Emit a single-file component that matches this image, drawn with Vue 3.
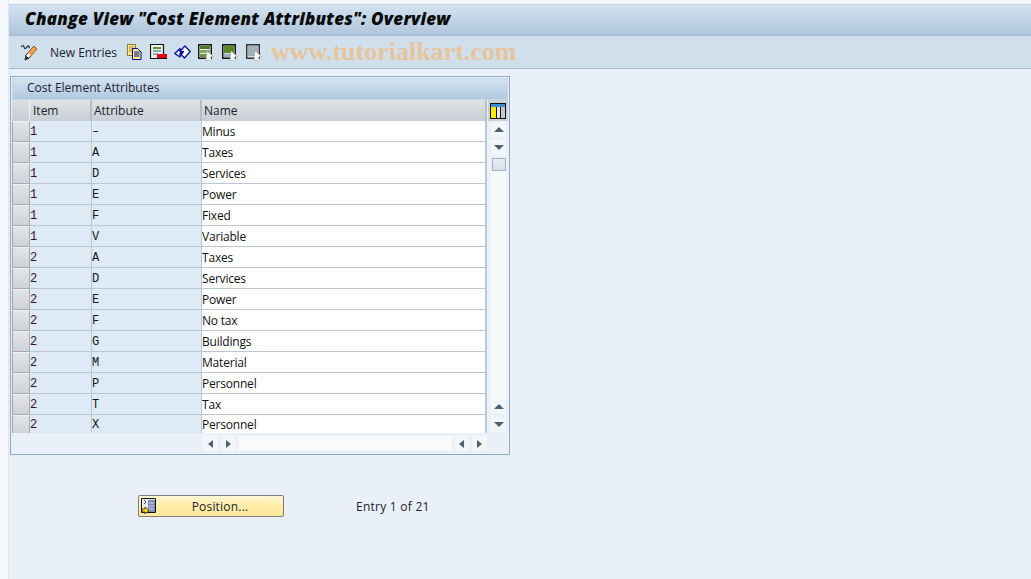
<script setup>
const rows = [
  ['1', '–', 'Minus'], ['1', 'A', 'Taxes'], ['1', 'D', 'Services'], ['1', 'E', 'Power'], ['1', 'F', 'Fixed'],
  ['1', 'V', 'Variable'], ['2', 'A', 'Taxes'], ['2', 'D', 'Services'], ['2', 'E', 'Power'], ['2', 'F', 'No tax'],
  ['2', 'G', 'Buildings'], ['2', 'M', 'Material'], ['2', 'P', 'Personnel'], ['2', 'T', 'Tax'], ['2', 'X', 'Personnel']
]
</script>

<template>
  <div class="page">
    <div class="margin"></div>
    <div class="main">
      <div class="title">Change View "Cost Element Attributes": Overview</div>
      <div class="toolbar">
        <svg class="ico pencil" width="18" height="18" viewBox="0 0 18 18">
          <path d="M1 4c1-2 2.500-2 3 0s2 2 3 0 2-1 2.500 1" fill="none" stroke="#222" stroke-width="1.200"/>
          <path d="M5 17l1-5 8-9 3 3-8 9z" fill="#fff" stroke="#222"/>
          <path d="M8 10l6-7 3 3-6 7z" fill="#f0a040"/>
          <path d="M5 17l1-4 3 2z" fill="#222"/>
        </svg>
        <span class="new">New Entries</span>
        <svg class="ico copy" width="16" height="16" viewBox="0 0 16 16">
          <path d="M.5.500h8v11h-8z" fill="#ffe680" stroke="#8a7a40"/>
          <path d="M2 3h5M2 5h5M2 7h5" stroke="#a09050"/>
          <path d="M5.500 4.500h5l3.500 3.500v7.500h-8.500z" fill="#fff27a" stroke="#00009c"/>
          <path d="M7 8h5.500M7 10h5.500M7 12h5.500" stroke="#00009c"/>
        </svg>
        <svg class="ico del" width="17" height="16" viewBox="0 0 17 16">
          <path d="M.5.500h13v14H.5z" fill="#eef2f2" stroke="#111" stroke-width="1.200"/>
          <path d="M3 3h8v2H3z" fill="#6a9030"/><path d="M3 6h8v2H3z" fill="#8aa8a0"/><path d="M3 9h5v2H3z" fill="#a0b0b0"/>
          <path d="M7 10h10v4H7z" fill="#e0000c"/><path d="M7 14h10v1H7z" fill="#111"/>
        </svg>
        <svg class="ico undo" width="17" height="16" viewBox="0 0 17 16">
          <path d="M.8 9.500l5.200-5v3l3-3.500 2-2 5.200 5.500-5.700 6.500-3.500-3.500 2.500-3-2 .5-1.500 1.500v3.500z" fill="#fff" stroke="#0a0a9a" stroke-width="1.300" stroke-linejoin="round"/>
        </svg>
        <svg class="ico sel1" width="16" height="17" viewBox="0 0 16 17">
          <path d="M.7.700h12.600v13.600H.7z" fill="#e8eef0" stroke="#111" stroke-width="1.400"/>
          <path d="M2 2h10v3H2z" fill="#4e7a28"/><path d="M2 6h10v3H2z" fill="#8aa860"/><path d="M2 10h10v3H2z" fill="#6f9040"/>
          <path d="M9 7l6.500 5.500-3 .5 1 3-5.500 .5z" fill="#fff" stroke="#999" stroke-width=".5"/>
        </svg>
        <svg class="ico sel2" width="16" height="17" viewBox="0 0 16 17">
          <path d="M.7.700h12.600v13.600H.7z" fill="#c8d4dc" stroke="#111" stroke-width="1.400"/>
          <path d="M2 2h10v7H2z" fill="#5c8428"/><path d="M2 10h10v3H2z" fill="#9ab0c0"/>
          <path d="M9 7l6.500 5.500-3 .5 1 3-5.500 .5z" fill="#fff" stroke="#999" stroke-width=".5"/>
        </svg>
        <svg class="ico sel3" width="16" height="17" viewBox="0 0 16 17">
          <path d="M.7.700h12.600v13.600H.7z" fill="#d8e0e4" stroke="#333" stroke-width="1.400"/>
          <path d="M2 3h10M2 5h10M2 7h10M2 9h10M2 11h10" stroke="#708090"/>
          <path d="M9 7l6.500 5.500-3 .5 1 3-5.500 .5z" fill="#fff" stroke="#999" stroke-width=".5"/>
        </svg>
        <span class="mark">www.tutorialkart.com</span>
      </div>

      <section class="group">
        <div class="group-title">Cost Element Attributes</div>
        <div class="table-area">
          <div class="table">
            <div class="head">
              <div class="corner"></div>
              <div class="hc c-item">Item</div>
              <div class="hc c-attr">Attribute</div>
              <div class="hc c-name">Name</div>
            </div>
            <div class="body">
              <div v-for="(r, i) in rows" :key="i" class="row">
                <div class="sel"></div>
                <div class="c c-item key">{{ r[0] }}</div>
                <div class="c c-attr mono">{{ r[1] }}</div>
                <div class="c c-name val">{{ r[2] }}</div>
              </div>
            </div>
            <div class="hbar">
              <span class="btn"><i class="tri left"></i></span>
              <span class="btn"><i class="tri right"></i></span>
              <span class="track"></span>
              <span class="btn"><i class="tri left"></i></span>
              <span class="btn"><i class="tri right"></i></span>
            </div>
          </div>
          <div class="vbar">
            <div class="cfg">
              <svg width="16" height="16" viewBox="0 0 16 16">
                <path d="M0 0h16v16H0z" fill="#111"/>
                <path d="M1 1h14v3H1z" fill="#3f8fd0"/>
                <path d="M1 4h5v11H1z" fill="#ffe800"/>
                <path d="M7 4h3v11H7z" fill="#e4e4e4"/>
                <path d="M11 4h4v11h-4z" fill="#c8c8c8"/>
              </svg>
            </div>
            <div class="vbtn top"><i class="tri up"></i></div>
            <div class="vbtn"><i class="tri down"></i></div>
            <div class="thumb"></div>
            <div class="vtrack"></div>
            <div class="vbtn last"><i class="tri up"></i></div>
            <div class="vbtn"><i class="tri down"></i></div>
          </div>
        </div>
      </section>

      <div class="actions">
        <button class="pos">
          <svg class="pos-ico" width="16" height="16" viewBox="0 0 16 16">
            <path d="M.5.500h14v14H.5z" fill="#e8e8f0" stroke="#111"/>
            <path d="M7 2h7v12H7z" fill="#8088b8"/>
            <path d="M8 5h5M8 8h5M8 11h5" stroke="#d8dcf0"/>
            <path d="M3 2l2 2-2 2" fill="none" stroke="#555"/>
            <path d="M1 11h3V9l4 3.500L4 16v-2H1z" fill="#ffd800" stroke="#111" stroke-width=".7"/>
          </svg>
          <span>Position...</span>
        </button>
        <span class="entry">Entry 1 of 21</span>
      </div>
    </div>
  </div>
</template>

<style>
html, body { margin: 0; background: #e9f0f7; }
</style>

<style scoped>
.page {
  width: 1031px;
  height: 579px;
  display: flex;
  overflow: hidden;
  font-family: "Open Sans", "Noto Sans", sans-serif;
  font-size: 12px;
  color: #111;
}
.margin { width: 8px; flex: none; background: #f4f7fb; border-right: 1px solid #dfe6ee; }
.main { flex: 1; min-width: 0; border-top: 4px solid #f4f7fb; background: #e9f0f7; }
.title {
  height: 32px;
  box-sizing: border-box;
  padding: 4px 0 0 16px;
  background: linear-gradient(#d3e2ef, #aec5dc);
  border-top: 1px solid #c5d3e0;
  border-bottom: 1px solid #a3b9cf;
  font-family: "Open Sans", sans-serif;
  font-weight: 800;
  font-style: italic;
  font-size: 17px;
  letter-spacing: .22px;
  line-height: 20px;
  white-space: nowrap;
  color: #0a0a0a;
}
.toolbar {
  height: 33px;
  box-sizing: border-box;
  display: flex;
  align-items: center;
  padding-left: 11px;
  background: #cfdfeb;
  border-bottom: 1px solid #a3b9cf;
}
.ico { flex: none; display: block; }
.new { margin-left: 12px; width: 77px; white-space: nowrap; color: #1a2230; }
.del { margin-left: 7px; }
.undo { margin-left: 7px; }
.sel1 { margin-left: 7px; }
.sel2 { margin-left: 8px; }
.sel3 { margin-left: 8px; }
.mark {
  margin-left: 9px;
  font-family: "Liberation Serif", serif;
  font-weight: 700;
  font-size: 26px;
  color: #e8c49c;
  white-space: nowrap;
}
.group {
  width: 500px;
  height: 379px;
  box-sizing: border-box;
  margin: 7px 0 0 1px;
  border: 1px solid #8fa9c4;
  padding: 1px;
  background: #e9f0f7;
}
.group-title {
  height: 22px;
  box-sizing: border-box;
  padding: 0 0 0 14px;
  line-height: 17px;
  background: linear-gradient(#d3e3f0, #b1c8de);
  border: 1px solid #c6d6e5;
  color: #1a2230;
  white-space: nowrap;
}
.table-area { display: flex; }
.table { width: 476px; flex: none; }
.head { height: 21px; display: flex; }
.corner { width: 18px; flex: none; background: linear-gradient(#dcdfe3, #c8cdd3); border-right: 1px solid #eef1f4; box-sizing: border-box; }
.hc {
  box-sizing: border-box;
  padding-left: 2px;
  line-height: 21px;
  background: linear-gradient(#dfe2e5, #c8ced4);
  border-right: 2px solid #b5bfc9;
  color: #1a2230;
  white-space: nowrap;
}
.hc.c-item { padding-left: 3px; }
.c-item { width: 62px; flex: none; }
.c-attr { width: 110px; flex: none; }
.c-name { width: 285px; flex: none; }
.body { height: 312px; overflow: hidden; }
.row { height: 21px; display: flex; }
.sel {
  width: 18px;
  flex: none;
  box-sizing: border-box;
  background: linear-gradient(#e2e5e8, #cdd2d7);
  border: 1px solid #a4abb2;
  border-top-color: #eef0f2;
  border-left-color: #9ca4ac;
}
.c {
  box-sizing: border-box;
  line-height: 21px;
  border-right: 1px solid #b9c8d6;
  border-bottom: 1px solid #b9c8d6;
  background: #deeaf5;
  white-space: nowrap;
  overflow: hidden;
}
.key { color: #3a1030; line-height: 22px; font-family: "Liberation Mono", monospace; }
.mono { font-family: "Liberation Mono", monospace; line-height: 23px; color: #111827; }
.val { background: #fff; letter-spacing: -.2px; border-right-width: 2px; }
.row:last-child .val { line-height: 19px; }
.row:last-child .mono { line-height: 21px; }
.row:last-child .key { line-height: 20px; }
.hbar { height: 20px; display: flex; align-items: flex-start; padding: 3px 0 0 191px; box-sizing: border-box; }
.btn { width: 15px; height: 15px; margin-right: 3px; background: #f2f6f9; display: flex; align-items: center; justify-content: center; flex: none; }
.track { width: 214px; height: 15px; background: #f8fafb; margin: 0 2px 0 -1px; flex: none; }
.tri { display: block; width: 0; height: 0; border-style: solid; border-color: transparent; }
.tri.left { border-width: 4px 5px 4px 0; border-right-color: #4d6070; }
.tri.right { border-width: 4px 0 4px 5px; border-left-color: #4d6070; }
.tri.up { border-width: 0 5px 5px; border-bottom-color: #4d6070; }
.tri.down { border-width: 5px 5px 0; border-top-color: #4d6070; }
.vbar { width: 20px; flex: none; display: flex; flex-direction: column; }
.cfg { width: 20px; height: 21px; display: flex; align-items: center; justify-content: center; background: #c8d0d8; }
.vbtn { width: 15px; height: 15px; margin: 3px 0 0 3px; background: #f2f6f9; display: flex; align-items: center; justify-content: center; flex: none; }
.vbtn.top { margin-top: 1px; }
.thumb { width: 14px; height: 13px; margin: 3px 0 0 4px; box-sizing: border-box; background: linear-gradient(#e6edf3, #d6e0ea); border: 1px solid #a7b1bb; flex: none; }
.vtrack { width: 15px; height: 228px; margin-left: 3px; background: #f6f9fb; flex: none; }
.vbtn.last { margin-top: 0; }
.actions { display: flex; align-items: center; margin: 40px 0 0 129px; height: 22px; }
.pos {
  width: 146px;
  height: 22px;
  box-sizing: border-box;
  padding: 0;
  background: linear-gradient(#fff8d6, #ffeea8 50%, #fde79a);
  border: 1px solid #7b7f78;
  border-radius: 2px;
  font: inherit;
  color: #1a2230;
  display: flex;
  align-items: center;
}
.pos-ico { margin-left: 2px; flex: none; }
.pos span { flex: 1; text-align: center; letter-spacing: .2px; }
.entry { margin-left: 72px; color: #1a2230; letter-spacing: .25px; white-space: nowrap; }
</style>
